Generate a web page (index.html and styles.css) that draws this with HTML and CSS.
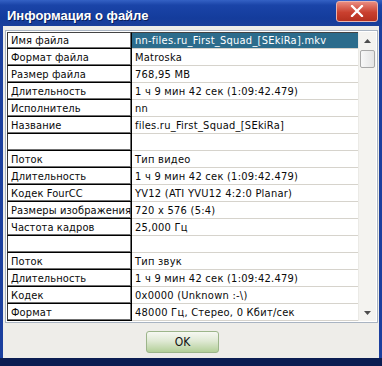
FILE: index.html
```html
<!DOCTYPE html>
<html lang="ru">
<head>
    <meta charset="UTF-8">
    <title>Информация о файле</title>
    <link rel="stylesheet" href="styles.css">
</head>
<body>
    <div class="window">
        <div class="titlebar">
            <span class="title">Информация о файле</span>
            <button class="close" type="button">
                <svg width="14" height="12" viewBox="0 0 14 12"><path d="M2 1 L12 11 M12 1 L2 11" stroke="#fff" stroke-width="2.4" stroke-linecap="round"/></svg>
            </button>
        </div>
        <div class="content">
            <div class="listbox">
                <table class="grid">
                    <tr><td class="key">Имя файла</td><td class="val selected">nn-files.ru_First_Squad_[SEkiRa].mkv</td></tr>
                    <tr><td class="key">Формат файла</td><td class="val">Matroska</td></tr>
                    <tr><td class="key">Размер файла</td><td class="val">768,95 MB</td></tr>
                    <tr><td class="key">Длительность</td><td class="val">1 ч 9 мин 42 сек (1:09:42.479)</td></tr>
                    <tr><td class="key">Исполнитель</td><td class="val">nn</td></tr>
                    <tr><td class="key">Название</td><td class="val">files.ru_First_Squad_[SEkiRa]</td></tr>
                    <tr><td class="key"></td><td class="val"></td></tr>
                    <tr><td class="key">Поток</td><td class="val">Тип видео</td></tr>
                    <tr><td class="key">Длительность</td><td class="val">1 ч 9 мин 42 сек (1:09:42.479)</td></tr>
                    <tr><td class="key">Кодек FourCC</td><td class="val">YV12 (ATI YVU12 4:2:0 Planar)</td></tr>
                    <tr><td class="key">Размеры изображения</td><td class="val">720 x 576 (5:4)</td></tr>
                    <tr><td class="key">Частота кадров</td><td class="val">25,000 Гц</td></tr>
                    <tr><td class="key"></td><td class="val"></td></tr>
                    <tr><td class="key">Поток</td><td class="val">Тип звук</td></tr>
                    <tr><td class="key">Длительность</td><td class="val">1 ч 9 мин 42 сек (1:09:42.479)</td></tr>
                    <tr><td class="key">Кодек</td><td class="val">0x0000 (Unknown :-\)</td></tr>
                    <tr><td class="key">Формат</td><td class="val">48000 Гц, Стерео, 0 Кбит/сек</td></tr>
                </table>
                <div class="scrollbar">
                    <div class="arrow">
                        <svg width="7" height="4" viewBox="0 0 7 4"><path d="M0 4 L3.5 0 L7 4 Z" fill="#4d4d4d"/></svg>
                    </div>
                    <div class="thumb"></div>
                    <div class="track"></div>
                    <div class="arrow">
                        <svg width="7" height="4" viewBox="0 0 7 4"><path d="M0 0 L3.5 4 L7 0 Z" fill="#4d4d4d"/></svg>
                    </div>
                </div>
            </div>
            <div class="actions">
                <button class="ok" type="button">OK</button>
            </div>
        </div>
    </div>
</body>
</html>
```

FILE: styles.css
```css
body {
    margin: 0;
    font-family: "DejaVu Sans Condensed", "Liberation Sans", Arial, sans-serif;
    font-size: 11px;
    background: #0a246a;
}
.window {
    width: 382px;
    height: 366px;
    box-sizing: border-box;
    display: flex;
    flex-direction: column;
    background: #1b3f9e;
    border-bottom: 8px solid #0b1d52;
}
.titlebar {
    height: 26px;
    flex: none;
    display: flex;
    align-items: center;
    justify-content: space-between;
    padding: 0 4px 0 7px;
    background: linear-gradient(#3461c4 0%, #1a44a8 20%, #143c9c 70%, #1a3f9a 100%);
}
.title {
    color: #fff;
    font-family: "Liberation Sans", Arial, sans-serif;
    font-weight: bold;
    font-size: 13px;
    text-shadow: 1px 1px 0 #0a1f5c;
    margin-top: 5px;
}
.close {
    width: 42px;
    height: 21px;
    margin-top: -4px;
    padding: 0;
    display: flex;
    align-items: center;
    justify-content: center;
    border: 1px solid #e9b3ad;
    border-radius: 3px;
    background: linear-gradient(#e88a7e, #c9402f 55%, #b5301f);
}
.content {
    flex: 1;
    margin: 0 3px;
    background: #eeede9;
    padding: 4px 1px 0 2px;
    display: flex;
    flex-direction: column;
}
.listbox {
    display: flex;
    border: 1px solid #a9b4c2;
    background: #fff;
    height: 293px;
    box-sizing: border-box;
    padding: 1px;
}
.grid {
    border-collapse: separate;
    border-spacing: 0;
    width: 353px;
    table-layout: fixed;
}
.grid td {
    height: 17px;
    padding: 0 0 0 3px;
    box-sizing: border-box;
    white-space: nowrap;
    overflow: hidden;
    color: #0a0a0a;
    line-height: 15px;
}
.key {
    width: 125px;
    letter-spacing: 0.1px;
    border-right: 1px solid #000;
    border-bottom: 1px solid #000;
    box-shadow: inset -1px -1px 0 #707070;
}
.grid tr td.key:first-child {
    border-left: 1px solid #333;
}
.grid tr:first-child td {
    border-top: 1px solid #444;
}
.val {
    letter-spacing: 0.25px;
    border-bottom: 1px solid #d6d3cc;
}
.val.selected {
    background: #2c6c8c;
    color: #fff;
}
.scrollbar {
    width: 17px;
    flex: none;
    margin-left: auto;
    display: flex;
    flex-direction: column;
    background: #f4f3f0;
    border-left: 1px solid #ebeae6;
}
.arrow {
    height: 17px;
    display: flex;
    align-items: center;
    justify-content: center;
}
.thumb {
    height: 16px;
    margin: 1px 1px 0 1px;
    border: 1px solid #a8a8a8;
    border-radius: 2px;
    background: linear-gradient(90deg, #f8f8f8, #e4e4e4);
}
.track {
    flex: 1;
}
.actions {
    flex: 1;
    display: flex;
    justify-content: center;
    align-items: flex-start;
    padding: 8px 18px 0 0;
}
.ok {
    width: 73px;
    height: 22px;
    font-family: "DejaVu Sans Condensed", "Liberation Sans", Arial, sans-serif;
    font-size: 12px;
    color: #111;
    border: 1px solid #9cb58a;
    border-radius: 3px;
    background: linear-gradient(#f6f8f2, #dfe9d4 45%, #b3cf98);
}
```
